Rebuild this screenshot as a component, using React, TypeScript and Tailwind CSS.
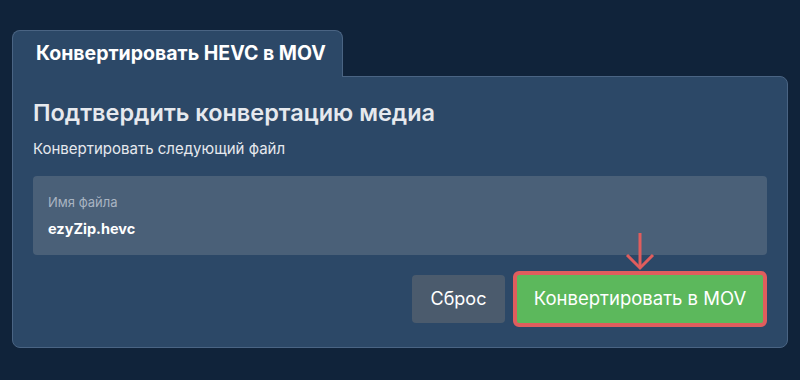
export default function App() {
  return (
    <div
      className="min-h-[380px] w-full bg-[#10233a] px-3 pt-[30px]"
      style={{ fontFamily: 'Inter, "Noto Sans", sans-serif' }}
    >
      <div className="w-[776px]">
        {/* Tab */}
        <div className="relative z-10 -mb-px flex h-[47px] w-[331px] items-center rounded-t-lg border-x border-t border-[#4a6483] bg-[#2c4867] pl-[23px]">
          <span className="text-[19.5px] font-bold text-white">Конвертировать HEVC в MOV</span>
        </div>

        {/* Panel */}
        <div className="rounded-b-lg rounded-tr-lg border border-[#4a6483] bg-[#2c4867] px-5 pb-5 pt-5">
          <h2 className="text-[23.5px] font-semibold leading-8 text-[#e6e9ee]">Подтвердить конвертацию медиа</h2>
          <p className="mt-[10px] text-[15px] leading-5 text-[#e6e9ee]">Конвертировать следующий файл</p>

          <div className="mt-[17px] h-[79px] rounded bg-[#4a6078] px-[15px] pt-4">
            <div className="text-[13px] leading-5 text-[#a9b4c2]">Имя файла</div>
            <div className="mt-[6px] text-[14.5px] font-bold leading-[22px] text-white">ezyZip.hevc</div>
          </div>

          <div className="mt-4 flex items-center justify-end gap-2">
            <button className="h-12 w-[93px] rounded bg-[#4b5b6d] text-lg text-white">Сброс</button>
            <div className="relative">
              <svg
                className="absolute left-[112px] top-[-38px]"
                width="30"
                height="38"
                viewBox="0 0 30 38"
                fill="none"
                stroke="#e05d5d"
                strokeWidth="3"
              >
                <line x1="15" y1="0" x2="15" y2="35" />
                <polyline points="2,22 15,35 28,22" />
              </svg>
              <button className="h-14 w-[254px] rounded-md border-4 border-[#e05d5d] bg-[#5cb85c] text-[18.5px] text-white">
                Конвертировать в MOV
              </button>
            </div>
          </div>
        </div>
      </div>
    </div>
  );
}
